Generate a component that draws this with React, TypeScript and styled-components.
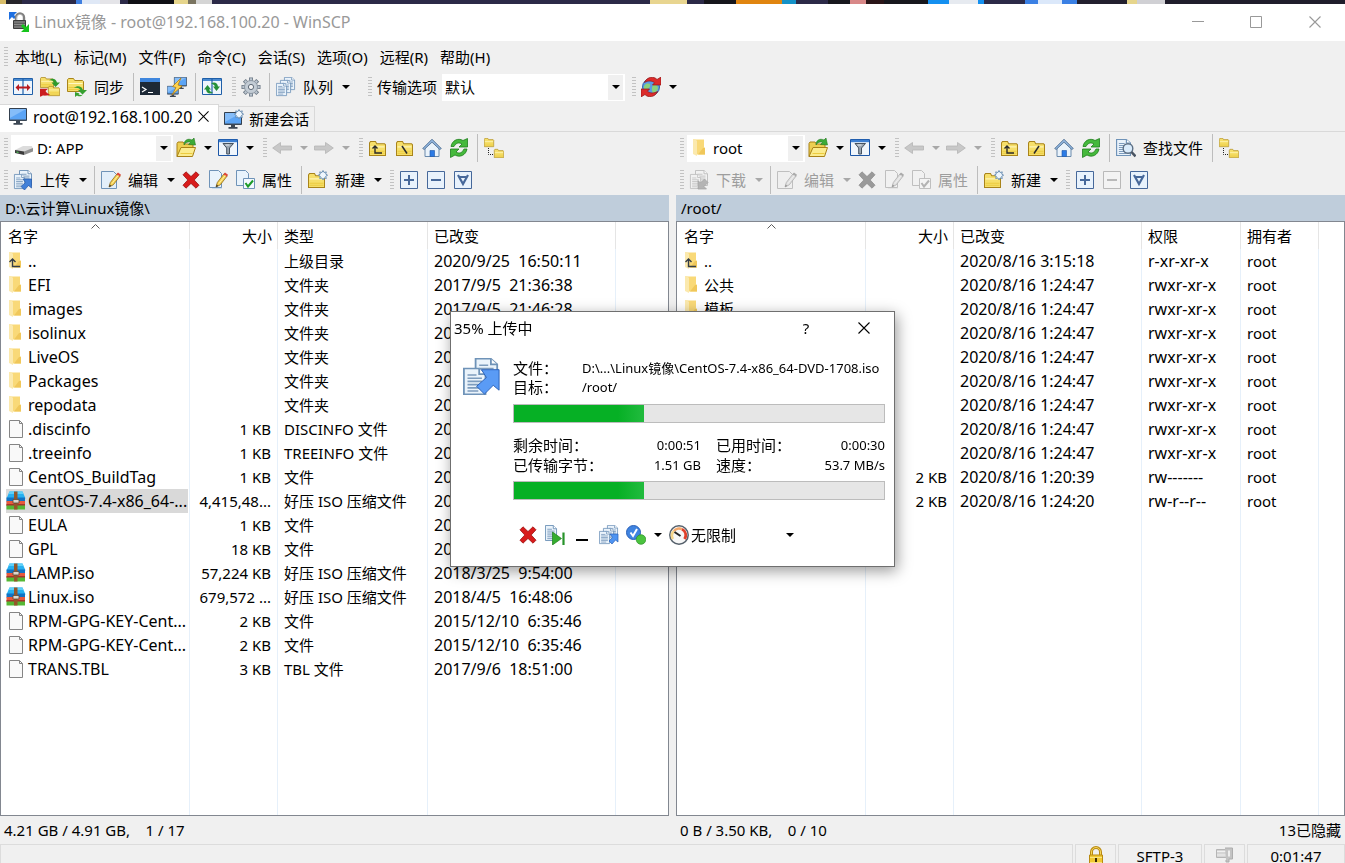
import React from "react";
import styled, { createGlobalStyle, css } from "styled-components";

const uiFont = `"Noto Sans", "Noto Sans CJK SC", sans-serif`;

const GlobalStyle = createGlobalStyle`
  *, *::before, *::after { box-sizing: border-box; }
  body {
    margin: 0;
    background: #f0f0f0;
    color: #000;
    font: 15px/20px ${uiFont};
    overflow: hidden;
  }
  button, select, input { font: inherit; color: inherit; }
`;

/* ---------- Icons ---------- */

type Drawing = { children: React.ReactNode; size?: number };

const Svg = ({ children, size = 20 }: Drawing) => (
  <svg width={size} height={size} viewBox="0 0 20 20" aria-hidden="true">
    {children}
  </svg>
);

const FolderShape = ({ x = 0, y = 0, w = 17, h = 14 }) => (
  <g transform={`translate(${x} ${y}) scale(${w / 17} ${h / 14})`}>
    <path d="M.5 13.500V1.800L1.500.5h5l1.200 2h7.800l1 1v10z" fill="#f6df6a" stroke="#a9841a" />
    <path d="M1.500 5.500h14" stroke="#fff8c4" />
    <path d="M1.500 9.500h14M1.500 11.500h14" stroke="#eccb3f" />
  </g>
);

const PageShape = ({ x = 0, y = 0, w = 13, h = 17 }) => (
  <g transform={`translate(${x} ${y}) scale(${w / 13} ${h / 17})`}>
    <path d="M.5.5h8.500l3.500 3.500v12.500H.5z" fill="#eaf3fb" stroke="#6f93b8" />
    <path d="M9 .5V4h3.500" fill="#fff" stroke="#6f93b8" />
    <path d="M2.500 4.500h5M2.500 6.500h8M2.500 8.500h8M2.500 10.500h8M2.500 12.500h8M2.500 14.500h6" stroke="#7d9cbd" />
  </g>
);

const MonitorShape = ({ x = 0, y = 0, s = 1 }) => (
  <g transform={`translate(${x} ${y}) scale(${s})`}>
    <path d="M.5.5h17v12H.5z" fill="#5ba4f5" stroke="#34404e" />
    <path d="M1 1h16L1 10z" fill="#85bdf9" />
    <path d="M1 12h16" stroke="#44505e" />
    <path d="M7 13h4v2h2.500v1.800h-9V15H7z" fill="#3c4754" />
  </g>
);

const BurstShape = ({ x = 0, y = 0 }) => (
  <path
    transform={`translate(${x} ${y})`}
    d="M5 .5l1.100 2 2.200-.6-.6 2.200 1.900 1.100-1.900 1.100.6 2.200-2.200-.6L5 9.900l-1.100-2-2.200.6.6-2.200L.4 5.200l1.900-1.100-.6-2.200 2.200.6z"
    fill="#eef6fd"
    stroke="#5f86ad"
    strokeWidth=".9"
  />
);

const PencilShape = () => (
  <g>
    <path d="M8 17l1.300-4.500 7-9 3 2.300-7 9z" fill="#f7d14f" stroke="#8d6a1c" strokeWidth=".8" />
    <path d="M15.500 4.500l1.500-2 3 2.300-1.500 2z" fill="#e0473b" />
    <path d="M8 17l.7-2.400 1.600 1.300z" fill="#333" />
    <path d="M10.800 13.800l6.500-8.500" stroke="#fdf0a8" />
  </g>
);

const AppLogo = () => (
  <Svg>
    <path d="M0 0h8L5 3l2 2-2 2-2-2-3 3z" fill="#1e6fe0" />
    <path d="M7 9V5.500a4 4 0 0 1 8 0V9" fill="none" stroke="#808080" strokeWidth="2.400" />
    <path d="M7.500 9V5.500a3.500 3.500 0 0 1 6 -2" fill="none" stroke="#c8c8c8" strokeWidth=".8" />
    <path d="M4.500 8.500h12v8h-12z" fill="#5e5e5e" stroke="#3c3c3c" />
    <path d="M5 10h11M5 12.500h11M5 15h11" stroke="#8f8f8f" />
    <path d="M20 20h-8l3-3-3-3 2-2 3 3 3-3z" fill="#17c41c" />
  </Svg>
);

const CompareIcon = () => (
  <Svg>
    <path d="M.5 1.500h19v16H.5z" fill="#eef5fc" stroke="#1f5fa8" />
    <path d="M1 3h18" stroke="#4a8ad0" strokeWidth="2" />
    <path d="M10 2v15" stroke="#1f5fa8" strokeWidth="1.200" />
    <path d="M2.500 10.500L6 7v2.500h8V7l3.500 3.500L14 14v-2.500H6V14z" fill="#b81a20" />
  </Svg>
);

const SyncBrowseIcon = () => (
  <Svg>
    <FolderShape x={0} y={0} w={14} h={11} />
    <FolderShape x={8} y={9} w={12} h={10} />
    <path d="M9 3.500c3-3 7-2 8 2h3L15.500 10 11.500 5.500H14c-1-1.800-2.500-2.500-5-2z" fill="#2f9a2c" />
    <path d="M10 17.500c-4 2-7 .5-8 1.500l-2 .8v-8h8L5.500 14c1 2 2.500 2.500 4.500 3.500z" fill="#cb1d1f" />
  </Svg>
);

const SyncIcon = () => (
  <Svg>
    <FolderShape x={0} y={1} w={17} h={14} />
    <path d="M7 11c3-3 8-2 9 2h4l-4.500 4.500L11 13h2.500C12 11 10 10.500 7 11z" fill="#36a030" />
    <path d="M16 17.500c-2 2.500-5 2-6 1l-2 1.500v-5l4.500 1.500-1 .8c1 1 3 1 4.500.2z" fill="#36a030" />
  </Svg>
);

const TerminalIcon = () => (
  <Svg>
    <path d="M0 1h20v17H0z" fill="#1d2936" />
    <path d="M0 1h20v4H0z" fill="#3f86dd" />
    <path d="M2 10l4 2.500L2 15M8 15.500h5" fill="none" stroke="#fff" strokeWidth="1.200" />
  </Svg>
);

const PuttyIcon = () => (
  <Svg>
    <MonitorShape x={7} y={0} s={0.72} />
    <MonitorShape x={0} y={9} s={0.65} />
    <path d="M14 1L5.500 9.500 9 10.500 5 18l10-9-4-1z" fill="#ffd34d" stroke="#b07c16" strokeWidth=".8" />
  </Svg>
);

const SplitIcon = () => (
  <Svg>
    <path d="M.5 1.500h19v16H.5z" fill="#eef5fc" stroke="#1f5fa8" />
    <path d="M1 3h18" stroke="#4a8ad0" strokeWidth="2" />
    <path d="M10 2v15" stroke="#1f5fa8" strokeWidth="1.200" />
    <path d="M9 6.500c3-2 6.500-1 7 3h2L14.500 14 11 9.500h2c-.5-1.500-2-2.500-4-3z" fill="#269138" />
    <path d="M11 15.500c-3 2-6.500 1-7-3H2L5.500 8 9 12.500H7c.5 1.500 2 2.500 4 3z" fill="#269138" />
  </Svg>
);

const GearIcon = () => (
  <Svg>
    <g stroke="#6b7784" strokeWidth="4">
      <path d="M10 .5v19M.5 10h19M3.300 3.300l13.400 13.400M16.700 3.300L3.300 16.700" />
    </g>
    <g stroke="#bcc6d0" strokeWidth="2.400">
      <path d="M10 1.300v17.400M1.300 10h17.400M3.900 3.900l12.200 12.200M16.100 3.900L3.900 16.100" />
    </g>
    <circle cx="10" cy="10" r="6.500" fill="#c3ccd5" stroke="#8c97a3" />
    <circle cx="10" cy="10" r="2.600" fill="#f4f4f4" stroke="#5f6b78" />
  </Svg>
);

const QueueIcon = () => (
  <Svg>
    <PageShape x={8} y={0} w={11} h={13} />
    <PageShape x={4} y={3} w={11} h={13} />
    <PageShape x={0} y={6} w={11} h={13} />
  </Svg>
);

const GlobeIcon = () => (
  <Svg>
    <circle cx="10" cy="10" r="8.500" fill="#5a9be6" stroke="#3566a8" />
    <path d="M5 7c3-1 5 0 4 2.500s-3 2-4 4.500c-3-2-2.500-6 0-7zM12 8c3-1 5 1 5 3s-3 5-5 6c-1-3-2-6 0-9z" fill="#8ad17c" />
    <path d="M3.500 5.500C6-.5 13-1 16 2.500L20 0v8h-8.500l2-2.200C11 3.500 7 3.500 3.500 5.500z" fill="#dc2b2b" stroke="#8f1414" strokeWidth=".7" />
    <path d="M16.500 14.500C14 20.500 7 21 4 17.500L0 20v-8h8.500l-2 2.200c2.500 2.300 6.500 2.300 10 .3z" fill="#dc2b2b" stroke="#8f1414" strokeWidth=".7" />
  </Svg>
);

const MonitorIcon = () => (
  <Svg>
    <MonitorShape x={1} y={1} />
  </Svg>
);

const NewSessionIcon = () => (
  <Svg>
    <MonitorShape x={0} y={3} />
    <BurstShape x={10} y={0} />
  </Svg>
);

const DriveIcon = () => (
  <Svg>
    <path d="M1 12l8-4h9l1 3-9 5z" fill="#dcdcdc" />
    <path d="M1 12l9 1.500V17L1 15z" fill="#3b3b3b" />
    <path d="M10 13.500l9-3.500v3.500L10 17z" fill="#8f8f8f" />
    <path d="M2.500 14l2 .4" stroke="#4dde5a" />
  </Svg>
);

const OpenFolderIcon = () => (
  <Svg>
    <path d="M1 18.500V5.500l1-1.500h5l1.500 2H17v4" fill="#edcf52" stroke="#a98217" />
    <path d="M1 18.500L5 9.500h14.500L16.500 18.500z" fill="#fbec8d" stroke="#a98217" />
    <path d="M4.500 15.500h12" stroke="#eccb3f" />
    <path d="M8 7c0-5 4-7 8-5l2-2 1.500 7-7-.5 2-2C12.500 3.500 10 4 8 7z" fill="#3bab38" stroke="#23791f" strokeWidth=".6" />
  </Svg>
);

const FilterIcon = () => (
  <Svg>
    <path d="M.5 1.500h19v16H.5z" fill="#f0f6fc" stroke="#1c56a6" />
    <path d="M1 3h18" stroke="#3c7fd2" strokeWidth="2.400" />
    <path d="M5 5.500h10.500L11.500 10v6h-2.800v-6z" fill="#9aa6b2" stroke="#46525f" />
    <path d="M7.500 7h4" stroke="#e9eef3" />
  </Svg>
);

const BackArrow = () => (
  <Svg>
    <path d="M.7 10L8.500 4.500V8h11v4h-11v3.500z" fill="#c8c8c8" stroke="#b5b5b5" strokeWidth=".8" />
  </Svg>
);

const ForwardArrow = () => (
  <Svg>
    <path d="M19.300 10L11.500 4.500V8H.5v4h11v3.500z" fill="#c8c8c8" stroke="#b5b5b5" strokeWidth=".8" />
  </Svg>
);

const ParentFolderIcon = () => (
  <Svg>
    <FolderShape x={1} y={3} w={17} h={15} />
    <path d="M7 8.500v6.500h7M4.500 10.500L7 8l2.500 2.500" fill="none" stroke="#2a2a2a" strokeWidth="1.400" />
  </Svg>
);

const RootFolderIcon = ({ slash }: { slash: string }) => (
  <Svg>
    <FolderShape x={1} y={3} w={17} h={15} />
    <path d={slash === "\\" ? "M7 8l5 7.500" : "M12 8l-5 7.500"} stroke="#2a2a2a" strokeWidth="1.500" />
  </Svg>
);

const HomeIcon = () => (
  <Svg>
    <path d="M3 9.500v9h14v-9L10 3z" fill="#eaf3fb" stroke="#6a8aac" />
    <path d="M.7 10.500L10 1.200l9.300 9.300-1.500 1L10 4.200l-7.800 7.300z" fill="#8fb3dc" stroke="#48688b" strokeWidth=".8" />
    <path d="M8 12.500h4.500v6H8z" fill="#2c7be5" stroke="#1c56a6" strokeWidth=".6" />
  </Svg>
);

const RefreshIcon = () => (
  <Svg>
    <path d="M2 8.500C3 2.500 9-.5 14 2.500L18.500.5v8.500h-8.500l3-3C9.500 4 7 5 5 8.500z" fill="#45b93c" stroke="#1e7d1c" strokeWidth=".8" />
    <path d="M18 11c-1 6-7 9-12 6l-4.500 2.500V11H10l-3 3c3.500 2 6 1 8-3z" fill="#45b93c" stroke="#1e7d1c" strokeWidth=".8" />
  </Svg>
);

const TreeIcon = () => (
  <Svg>
    <FolderShape x={0} y={0} w={10} h={9} />
    <FolderShape x={10} y={11} w={10} h={9} />
    <path d="M4.500 10v6.500H9" fill="none" stroke="#222" strokeDasharray="1 1" />
  </Svg>
);

const CopyDocs = ({ size = 20 }: { size?: number }) => (
  <Svg size={size}>
    <PageShape x={6} y={0} w={12} h={14} />
    <PageShape x={0} y={5} w={12} h={14} />
    <path d="M18.500 6v10.500L15.500 14l-4.500 4.500-4-4L12 10 9.500 6z" fill="#5a9bf5" stroke="#2a61b8" strokeWidth=".5" />
  </Svg>
);

const UploadIcon = () => (
  <Svg>
    <PageShape x={6} y={0} w={13} h={16} />
    <PageShape x={1} y={4} w={11} h={15} />
    <path d="M18.500 9v9l-3-2.500L11.500 20 8 16.500l4.500-4L10 9z" fill="#4180d8" stroke="#2458a8" strokeWidth=".7" />
  </Svg>
);

const DownloadIcon = () => (
  <Svg>
    <PageShape x={6} y={0} w={13} h={16} />
    <PageShape x={1} y={4} w={11} h={15} />
    <path d="M9 19v-8.500l2.500 2.500L15.500 9l3.500 3.500-4 4 2.500 2.500z" fill="#4180d8" stroke="#2458a8" strokeWidth=".7" />
  </Svg>
);

const EditIcon = () => (
  <Svg>
    <path d="M.5 1.500h12l3 3v14H.5z" fill="#e3effa" stroke="#6f93b8" />
    <PencilShape />
  </Svg>
);

const EditCopyIcon = () => (
  <Svg>
    <path d="M4 3.500h10V19H4z" fill="#cbdcec" />
    <path d="M1.500.5h9l3 3v14h-12z" fill="#e9f3fc" stroke="#6f93b8" />
    <PencilShape />
  </Svg>
);

const DeleteIcon = () => (
  <Svg>
    <path
      d="M2 4.800L5 1.800l5 4.800 5-4.800 3 3-4.800 5.200 4.800 5.200-3 3-5-4.800-5 4.800-3-3L6.800 10z"
      fill="#d81b1b"
      stroke="#9c1010"
      strokeWidth=".8"
    />
  </Svg>
);

const PropertiesIcon = () => (
  <Svg>
    <path d="M1.500.5h9l3 3v12h-12z" fill="#e9f3fc" stroke="#6f93b8" />
    <path d="M8.500 8.500h11v10h-11z" fill="#f3f9ff" stroke="#6f93b8" />
    <path d="M10.500 13l2.500 3.500 5-6" fill="none" stroke="#1c9a27" strokeWidth="2" />
  </Svg>
);

const NewFolderIcon = () => (
  <Svg>
    <FolderShape x={0} y={3} w={17} h={15} />
    <BurstShape x={10} y={0} />
  </Svg>
);

const BoxIcon = ({ sign, off }: { sign: "plus" | "minus" | "all"; off?: boolean }) => {
  const ink = off ? "#b9b9b9" : "#46689a";
  return (
    <Svg>
      <path d="M1.500 1.500h17v17h-17z" fill={off ? "#f3f3f3" : "#e8f2fc"} stroke={ink} />
      {sign === "plus" && <path d="M5 10h10M10 5v10" stroke={ink} strokeWidth="2" />}
      {sign === "minus" && <path d="M5 10h10" stroke={ink} strokeWidth="2" />}
      {sign === "all" && <path d="M5 5l5 9 5-9M7 7h6" fill="none" stroke={ink} strokeWidth="2.200" />}
    </Svg>
  );
};

const FindIcon = () => (
  <Svg>
    <PageShape x={0} y={1} w={15} h={17} />
    <circle cx="12" cy="10.500" r="4.800" fill="#d9ebfb" stroke="#5c6f84" strokeWidth="1.400" />
    <path d="M15.500 14l4 4.500" stroke="#4a5563" strokeWidth="2.600" />
  </Svg>
);

const ListFolder = ({ up }: { up?: boolean }) => (
  <Svg>
    <path d="M5 1.500h9v8h1v7H5z" fill="#f9d978" />
    <path d="M13 10h2v6.500H8z" fill="#f0c75a" />
    <path d="M3 1h2l2 2v15l-4-2z" fill="#fbe9ae" />
    {up && <path d="M6.500 8.500v7h7.500M3.500 11l3-3 3 3" fill="none" stroke="#333c48" strokeWidth="1.400" />}
  </Svg>
);

const ListFile = () => (
  <Svg>
    <path d="M3.500 1.500h10l3 3v14h-13z" fill="#f9f9f9" stroke="#858585" />
    <path d="M13.500 1.500v3h3" fill="none" stroke="#858585" />
  </Svg>
);

const ArchiveIcon = () => (
  <Svg>
    <path d="M3.500.5h13l3 7H.5z" fill="#27b0f0" />
    <path d="M3.500.5h13l1 2.500h-15z" fill="#5fd0f8" />
    <path d="M.5 6.500h18.500v4H.5z" fill="#1272c4" />
    <path d="M.5 10h18.500v4.500H.5z" fill="#e8593c" />
    <path d="M.5 13h18.500v2H.5z" fill="#a5352a" />
    <path d="M.5 14.500h18.500v4H.5z" fill="#55b835" />
    <path d="M8 .5h3.500v18H8z" fill="#93572a" />
    <path d="M7 8.500h6v3.500H7z" fill="#ddd6cc" stroke="#5b4a38" strokeWidth=".8" />
  </Svg>
);

const LockIcon = () => (
  <Svg>
    <path d="M5.500 10V6a4.500 4.500 0 0 1 9 0v4" fill="none" stroke="#b98a10" strokeWidth="3" />
    <path d="M5.500 10V6a4.500 4.500 0 0 1 9 0v4" fill="none" stroke="#f5d65b" />
    <path d="M3.500 9h13v10h-13z" fill="#f1c832" stroke="#b98a10" />
    <path d="M4 11.500h12M4 16.500h12" stroke="#fae57f" />
    <path d="M10 12v4" stroke="#3b2d05" strokeWidth="2" />
  </Svg>
);

const CompressIcon = () => (
  <Svg>
    <path d="M1.500 3.500h11v8h-11z" fill="#d5d5d5" stroke="#b5b5b5" />
    <path d="M2 5.500h10M2 9h10" stroke="#f0f0f0" />
    <path d="M10 2h7.500v11H14v3h-3v-2" fill="#c3c3c3" stroke="#adadad" />
    <path d="M13 4.500h2v6h-2z" fill="#eee" />
    <path d="M6 18h11" stroke="#b5b5b5" strokeWidth="2" />
  </Svg>
);

const SkipIcon = () => (
  <Svg>
    <PageShape x={0} y={0} w={12} h={16} />
    <path d="M7.500 7l9 6.500-9 6.500z" fill="#35ad2e" stroke="#1e7d1c" strokeWidth=".7" />
    <path d="M18.500 7.500v12.500" stroke="#27932a" strokeWidth="2.200" />
  </Svg>
);

const MinimizeIcon = () => (
  <Svg>
    <path d="M4 15h12" stroke="#000" strokeWidth="2" />
  </Svg>
);

const BackgroundIcon = () => (
  <Svg>
    <PageShape x={8} y={0} w={11} h={13} />
    <PageShape x={4} y={3} w={11} h={13} />
    <PageShape x={0} y={6} w={11} h={13} />
    <path d="M19 9v8l-2.500-2L13 19l-3-3 3.500-3.500-2.500-3.500z" fill="#4e94f2" stroke="#2a61b8" strokeWidth=".7" />
  </Svg>
);

const DoneActionIcon = () => (
  <Svg>
    <circle cx="7.500" cy="7.500" r="7" fill="#3f83e0" stroke="#2a61b8" />
    <path d="M4.500 7.500l2.500 3.500 4-7" fill="none" stroke="#fff" strokeWidth="2" />
    <circle cx="15" cy="14.500" r="4.800" fill="#4bc33f" stroke="#2c8f27" strokeWidth=".7" />
  </Svg>
);

const GaugeIcon = () => (
  <Svg>
    <circle cx="10" cy="10" r="9.200" fill="#f7f7f7" stroke="#55606b" strokeWidth="1.500" />
    <path d="M4 14A6.500 6.500 0 0 1 5 6" fill="none" stroke="#f5d58a" strokeWidth="2.500" />
    <path d="M5 6a6.500 6.500 0 0 1 8-1.800" fill="none" stroke="#f4a86a" strokeWidth="2.500" />
    <path d="M13 4.200a6.500 6.500 0 0 1 2.500 9.800" fill="none" stroke="#e0402b" strokeWidth="2.800" />
    <path d="M5.500 7l6 4" stroke="#222" strokeWidth="2" />
  </Svg>
);

const Caret = () => (
  <svg width="8" height="4" viewBox="0 0 8 4" aria-hidden="true">
    <path d="M0 0h8L4 4z" fill="currentColor" />
  </svg>
);

const Cross = ({ size = 12 }: { size?: number }) => (
  <svg width={size} height={size} viewBox="0 0 12 12" aria-hidden="true">
    <path d="M.5.5l11 11M11.500.5l-11 11" stroke="currentColor" strokeWidth="1.100" />
  </svg>
);

/* ---------- Window frame ---------- */

const Window = styled.div`
  display: flex;
  flex-direction: column;
  height: 100vh;
  overflow: hidden;
  svg { display: block; flex: none; }
`;

const DesktopEdge = styled.div`
  flex: none;
  height: 4px;
  background: linear-gradient(
    90deg,
    #d8bd6a 0 6px, #26242a 6px 22px, #2c2a48 22px 76px, #3f7fe0 76px 82px, #dfe8f6 82px 100px,
    #e4e4e8 100px 120px, #2c2a48 120px 128px, #101015 128px 174px, #e6d58c 174px 188px, #7a7460 188px 196px,
    #d5d5d5 196px 212px, #2c2a48 212px 650px, #e8d590 650px 687px, #2c2a48 687px 704px, #16161c 704px 736px,
    #e08510 736px 782px, #1492c8 782px 796px, #2c2a48 796px 828px, #17171d 828px 850px, #d88888 850px 866px,
    #2a1518 866px 884px, #17171d 884px 928px, #1490f0 928px 949px, #e6eaf0 949px 978px, #1490f0 978px 984px,
    #2c2a48 984px 1025px, #3a80e4 1025px 1038px, #dbe8fa 1038px 1062px, #3a80e4 1062px 1077px,
    #22202e 1077px 1127px, #e6d58c 1127px 1137px, #d0d0d4 1137px 1165px, #1f1d2b 1165px
  );
`;

const TitleBar = styled.header`
  flex: none;
  display: flex;
  align-items: center;
  height: 37px;
  padding: 0 0 2px 9px;
  background: #fff;
  color: #999;
`;

const WindowTitle = styled.h1`
  flex: 1;
  margin: 0 0 0 5px;
  font-size: 16px;
  font-weight: 400;
  white-space: nowrap;
`;

const FrameButton = styled.button<{ $w?: number }>`
  display: flex;
  align-items: center;
  justify-content: center;
  width: ${(p) => p.$w ?? 58}px;
  height: 100%;
  padding: 0;
  border: 0;
  background: none;
`;

const MenuBar = styled.nav`
  flex: none;
  display: flex;
  align-items: center;
  height: 31px;
  padding-left: 4px;
`;

const MenuItem = styled.button`
  padding: 0 7px 0 5px;
  border: 0;
  background: none;
  white-space: nowrap;
`;

/* ---------- Toolbars ---------- */

const ToolRow = styled.div<{ $h?: number }>`
  flex: none;
  display: flex;
  align-items: center;
  height: ${(p) => p.$h ?? 30}px;
  padding-left: 4px;
`;

const Grip = styled.span<{ $before?: number }>`
  flex: none;
  width: 4px;
  height: 20px;
  margin: 0 2px 0 ${(p) => p.$before ?? 0}px;
  background: repeating-linear-gradient(#c2c2c2 0 1px, transparent 1px 3px);
`;

const Divider = styled.span`
  flex: none;
  width: 1px;
  height: 28px;
  margin: 0 3px 0 4px;
  background: #bdbdbd;
`;

const ToolButton = styled.button<{ $labelled: boolean }>`
  flex: none;
  display: flex;
  align-items: center;
  gap: 7px;
  height: 26px;
  padding: 0 ${(p) => (p.$labelled ? 5 : 4)}px 0 3px;
  border: 0;
  background: none;
  white-space: nowrap;
  &:disabled { color: #9d9d9d; }
  &:disabled svg { filter: grayscale(1) opacity(0.5); }
`;

const CaretButton = styled.button`
  flex: none;
  display: flex;
  align-items: center;
  justify-content: center;
  width: 15px;
  height: 26px;
  padding: 0;
  border: 0;
  background: none;
  &:disabled { color: #a8a8a8; }
`;

const FieldLabel = styled.label`
  padding: 0 5px 0 3px;
  white-space: nowrap;
`;

const Combo = styled.div<{ $w: number; $flat?: boolean }>`
  flex: none;
  display: flex;
  align-items: center;
  width: ${(p) => p.$w}px;
  height: 27px;
  padding: 1px 2px 1px 3px;
  background: #fff;
  ${(p) =>
    p.$flat &&
    css`
      padding-left: 4px;
      gap: 2px;
    `}
`;

const ComboSelect = styled.select`
  flex: 1;
  min-width: 0;
  height: 25px;
  padding: 0;
  border: 0;
  background: transparent;
  appearance: none;
  outline: 0;
`;

const ComboCaret = styled.span<{ $flat?: boolean }>`
  display: flex;
  align-items: center;
  justify-content: center;
  width: 15px;
  height: 25px;
  background: ${(p) => (p.$flat ? "transparent" : "#f0f0f0")};
  pointer-events: none;
`;

const ComboIcon = styled.span`
  margin-right: 3px;
`;

const PlaceRow = styled(ToolRow)`
  ${Grip} + ${Combo} { margin-left: 1px; }
`;

/* ---------- Session tabs ---------- */

const Tabs = styled.div`
  flex: none;
  display: flex;
  align-items: flex-end;
  height: 30px;
  box-shadow: inset 0 -1px #d9d9d9;
`;

const Tab = styled.div<{ $active?: boolean }>`
  display: flex;
  align-items: center;
  height: ${(p) => (p.$active ? 28 : 26)}px;
  border: 1px solid #d9d9d9;
  border-left-width: 0;
  border-bottom-color: ${(p) => (p.$active ? "#fff" : "#d9d9d9")};
  background: ${(p) => (p.$active ? "#fff" : "#f0f0f0")};
  padding: ${(p) => (p.$active ? "0 9px 3px 8px" : "0 5px")};
  font-size: ${(p) => (p.$active ? 16 : 15)}px;
`;

const TabButton = styled.button`
  display: flex;
  align-items: center;
  gap: 5px;
  padding: 0;
  border: 0;
  background: none;
  white-space: nowrap;
`;

const TabClose = styled.button`
  margin-left: 6px;
  padding: 0;
  border: 0;
  background: none;
`;

/* ---------- Panes ---------- */

const Panes = styled.main`
  flex: 1;
  min-height: 0;
  display: grid;
  grid-template-columns: 1fr 1fr;
  grid-template-rows: 1fr;
  column-gap: 7px;
`;

const Pane = styled.section`
  display: flex;
  flex-direction: column;
  min-width: 0;
  min-height: 0;
`;

const PathBar = styled.div`
  flex: none;
  height: 26px;
  padding: 3px 5px;
  background: #bfcddb;
  white-space: nowrap;
`;

const ListBox = styled.div`
  flex: 1;
  min-height: 0;
  border: 1px solid #828790;
  background: #fff;
  overflow: hidden;
`;

const FileTable = styled.table`
  width: 100%;
  height: 100%;
  table-layout: fixed;
  border-collapse: separate;
  border-spacing: 0;
`;

const Col = styled.col<{ $w?: number }>`
  ${(p) => p.$w && `width: ${p.$w}px;`}
`;

const HeadCell = styled.th<{ $right?: boolean }>`
  position: relative;
  height: 27px;
  padding: ${(p) => (p.$right ? "0 5px" : "1px 6px 0")};
  border-right: 1px solid #e5e5e5;
  font-weight: 400;
  text-align: ${(p) => (p.$right ? "right" : "left")};
  white-space: nowrap;
  &:first-child { padding-left: 7px; }
  &:last-child { border-right: 0; }
`;

const SortMark = styled.svg`
  position: absolute;
  top: 2px;
  left: calc(50% - 4px);
`;

const Cell = styled.td<{ $right?: boolean; $large?: boolean }>`
  height: 24px;
  padding: 0 6px;
  border-right: 1px solid #e6f0fa;
  font-size: ${(p) => (p.$large ? 16 : 15)}px;
  text-align: ${(p) => (p.$right ? "right" : "left")};
  white-space: pre;
  overflow: hidden;
  &:last-child { border-right: 0; }
`;

const NameCell = styled(Cell)`
  padding: 0 1px 0 5px;
`;

const FillerCell = styled(Cell)`
  height: auto;
`;

const NameBox = styled.div<{ $selected?: boolean }>`
  display: flex;
  align-items: center;
  gap: 2px;
  height: 24px;
  overflow: hidden;
  background: ${(p) => (p.$selected ? "#d9d9d9" : "transparent")};
`;

const PaneStatus = styled.div`
  flex: none;
  display: flex;
  justify-content: space-between;
  align-items: center;
  height: 28px;
  padding: 0 4px;
  white-space: pre;
`;

const StatusBar = styled.footer`
  flex: none;
  display: flex;
  gap: 2px;
  height: 19px;
  overflow: hidden;
`;

const StatusBox = styled.div<{ $w?: number }>`
  display: flex;
  align-items: center;
  justify-content: center;
  flex: ${(p) => (p.$w ? "none" : "1")};
  width: ${(p) => (p.$w ? `${p.$w}px` : "auto")};
  height: 24px;
  border: 1px solid #dcdcdc;
`;

/* ---------- Progress dialog ---------- */

const Overlay = styled.div`
  position: fixed;
  inset: 0;
  display: flex;
  justify-content: center;
  align-items: flex-start;
  padding-top: 311px;
  svg { display: block; flex: none; }
`;

const Dialog = styled.div`
  width: 445px;
  height: 256px;
  border: 1px solid #6f6f6f;
  background: #fff;
  box-shadow: 2px 4px 14px rgba(0, 0, 0, 0.4);
`;

const DialogTitle = styled.div`
  display: flex;
  align-items: center;
  height: 31px;
  padding-left: 3px;
`;

const DialogHeading = styled.h2`
  flex: 1;
  margin: 0;
  font-size: 15px;
  font-weight: 400;
`;

const DialogBody = styled.div`
  display: flex;
  gap: 11px;
  padding: 15px 9px 0 12px;
`;

const Details = styled.div`
  flex: 1;
  min-width: 0;
`;

const PairGrid = styled.dl`
  display: grid;
  grid-template-columns: 69px 1fr;
  grid-auto-rows: 19px;
  align-items: center;
  margin: 0 0 8px;
`;

const StatGrid = styled.dl`
  display: grid;
  grid-template-columns: 88px 100px 84px 1fr;
  grid-auto-rows: 20px;
  align-items: center;
  margin: 12px 0 6px;
`;

const Term = styled.dt`
  font-size: 15px;
  white-space: nowrap;
`;

const Value = styled.dd<{ $right?: boolean }>`
  margin: 0;
  font-size: 13px;
  text-align: ${(p) => (p.$right ? "right" : "left")};
  white-space: nowrap;
`;

const RightTerm = styled(Term)`
  padding-left: 15px;
`;

const Track = styled.div`
  height: 19px;
  border: 1px solid #bcbcbc;
  background: #e6e6e6;
`;

const Fill = styled.div`
  height: 100%;
  background: linear-gradient(90deg, #06b025 80%, #1fba3c 98%);
`;

const DialogTools = styled.div`
  display: flex;
  align-items: center;
  height: 30px;
  margin: 20px 0 0 2px;
`;

const percent = 35;

const ProgressBar = ({ label }: { label: string }) => (
  <Track role="progressbar" aria-label={label} aria-valuenow={percent} aria-valuemin={0} aria-valuemax={100}>
    <Fill style={{ width: `${percent}%` }} />
  </Track>
);

/* ---------- Data ---------- */

type Kind = "up" | "folder" | "file" | "archive";
type Row = { kind: Kind; name: string; selected?: boolean; cells: string[] };

const kindIcon: Record<Kind, React.ReactNode> = {
  up: <ListFolder up />,
  folder: <ListFolder />,
  file: <ListFile />,
  archive: <ArchiveIcon />,
};

const row = (kind: Kind, name: string, ...cells: string[]): Row => ({ kind, name, cells });

const localRows: Row[] = [
  row("up", "..", "", "上级目录", "2020/9/25  16:50:11"),
  row("folder", "EFI", "", "文件夹", "2017/9/5  21:36:38"),
  row("folder", "images", "", "文件夹", "2017/9/5  21:46:28"),
  row("folder", "isolinux", "", "文件夹", "2017/9/5  21:36:38"),
  row("folder", "LiveOS", "", "文件夹", "2017/9/5  21:36:38"),
  row("folder", "Packages", "", "文件夹", "2017/9/5  21:36:38"),
  row("folder", "repodata", "", "文件夹", "2017/9/5  21:36:38"),
  row("file", ".discinfo", "1 KB", "DISCINFO 文件", "2017/9/5  21:36:38"),
  row("file", ".treeinfo", "1 KB", "TREEINFO 文件", "2017/9/5  21:36:38"),
  row("file", "CentOS_BuildTag", "1 KB", "文件", "2017/9/5  21:36:38"),
  { ...row("archive", "CentOS-7.4-x86_64-...", "4,415,48...", "好压 ISO 压缩文件", "2018/3/25  9:54:00"), selected: true },
  row("file", "EULA", "1 KB", "文件", "2017/9/5  21:36:38"),
  row("file", "GPL", "18 KB", "文件", "2017/9/5  21:36:38"),
  row("archive", "LAMP.iso", "57,224 KB", "好压 ISO 压缩文件", "2018/3/25  9:54:00"),
  row("archive", "Linux.iso", "679,572 ...", "好压 ISO 压缩文件", "2018/4/5  16:48:06"),
  row("file", "RPM-GPG-KEY-Cent...", "2 KB", "文件", "2015/12/10  6:35:46"),
  row("file", "RPM-GPG-KEY-Cent...", "2 KB", "文件", "2015/12/10  6:35:46"),
  row("file", "TRANS.TBL", "3 KB", "TBL 文件", "2017/9/6  18:51:00"),
];

const remoteRows: Row[] = [
  row("up", "..", "", "2020/8/16 3:15:18", "r-xr-xr-x", "root"),
  ...["公共", "模板", "视频", "图片", "文档", "下载", "音乐", "桌面"].map((name) =>
    row("folder", name, "", "2020/8/16 1:24:47", "rwxr-xr-x", "root"),
  ),
  row("file", "anaconda-ks.cfg", "2 KB", "2020/8/16 1:20:39", "rw-------", "root"),
  row("file", "initial-setup-ks.cfg", "2 KB", "2020/8/16 1:24:20", "rw-r--r--", "root"),
];

type Column = { head: string; width: number; large?: boolean };

const localColumns: Column[] = [
  { head: "名字", width: 189, large: true },
  { head: "大小", width: 88 },
  { head: "类型", width: 150 },
  { head: "已改变", width: 188, large: true },
];

const remoteColumns: Column[] = [
  { head: "名字", width: 189 },
  { head: "大小", width: 88 },
  { head: "已改变", width: 188, large: true },
  { head: "权限", width: 99, large: true },
  { head: "拥有者", width: 78 },
];

const menus = ["本地(L)", "标记(M)", "文件(F)", "命令(C)", "会话(S)", "选项(O)", "远程(R)", "帮助(H)"];

/* ---------- Parts ---------- */

const FileList = ({ columns, rows }: { columns: Column[]; rows: Row[] }) => (
  <ListBox>
    <FileTable>
      <colgroup>
        {columns.map((c) => (
          <Col key={c.head} $w={c.width} />
        ))}
        <Col />
      </colgroup>
      <thead>
        <tr>
          {columns.map((c, i) => (
            <HeadCell key={c.head} $right={i === 1}>
              {c.head}
              {i === 0 && (
                <SortMark width="9" height="5" viewBox="0 0 9 5">
                  <path d="M.5 4.500l4-4 4 4" fill="none" stroke="#5a5a5a" />
                </SortMark>
              )}
            </HeadCell>
          ))}
          <HeadCell as="td" />
        </tr>
      </thead>
      <tbody>
        {rows.map((r, i) => (
          <tr key={i}>
            <NameCell $large={columns[0].large}>
              <NameBox $selected={r.selected}>
                {kindIcon[r.kind]}
                {r.name}
              </NameBox>
            </NameCell>
            {r.cells.map((text, j) => (
              <Cell key={j} $right={j === 0} $large={columns[j + 1].large}>
                {text}
              </Cell>
            ))}
            <Cell />
          </tr>
        ))}
        <tr>
          {columns.map((c) => (
            <FillerCell key={c.head} />
          ))}
          <FillerCell />
        </tr>
      </tbody>
    </FileTable>
  </ListBox>
);

const Tool = ({ label, text, off, children }: { label?: string; text?: string; off?: boolean; children: React.ReactNode }) => (
  <ToolButton type="button" aria-label={text ? undefined : label} disabled={off} $labelled={!!text}>
    {children}
    {text}
  </ToolButton>
);

const More = ({ label, off }: { label: string; off?: boolean }) => (
  <CaretButton type="button" aria-label={label} disabled={off}>
    <Caret />
  </CaretButton>
);

const PlaceTools = ({ remote }: { remote?: boolean }) => (
  <PlaceRow $h={32}>
    <Grip />
    <Combo $w={remote ? 118 : 162}>
      <ComboIcon>{remote ? <ListFolder /> : <DriveIcon />}</ComboIcon>
      <ComboSelect aria-label={remote ? "远程目录" : "本地驱动器"}>
        <option>{remote ? "root" : "D: APP"}</option>
      </ComboSelect>
      <ComboCaret>
        <Caret />
      </ComboCaret>
    </Combo>
    <Tool label="打开目录"><OpenFolderIcon /></Tool>
    <More label="打开目录选项" />
    <Tool label="过滤"><FilterIcon /></Tool>
    <More label="过滤选项" />
    <Grip $before={6} />
    <Tool label="后退"><BackArrow /></Tool>
    <More label="后退历史" off />
    <Tool label="前进"><ForwardArrow /></Tool>
    <More label="前进历史" off />
    <Grip $before={6} />
    <Tool label="上级目录"><ParentFolderIcon /></Tool>
    <Tool label="根目录"><RootFolderIcon slash={remote ? "/" : "\\"} /></Tool>
    <Tool label="主目录"><HomeIcon /></Tool>
    <Tool label="刷新"><RefreshIcon /></Tool>
    <Divider />
    {remote && (
      <>
        <Tool text="查找文件"><FindIcon /></Tool>
        <Divider />
      </>
    )}
    <Tool label="目录树"><TreeIcon /></Tool>
  </PlaceRow>
);

const FileTools = ({ remote }: { remote?: boolean }) => (
  <ToolRow $h={31}>
    <Grip />
    <Tool text={remote ? "下载" : "上传"} off={remote}>{remote ? <DownloadIcon /> : <UploadIcon />}</Tool>
    <More label="传输选项" off={remote} />
    <Divider />
    <Tool text="编辑" off={remote}><EditIcon /></Tool>
    <More label="编辑选项" off={remote} />
    <Tool label="删除" off={remote}><DeleteIcon /></Tool>
    <Tool label="重命名" off={remote}><EditCopyIcon /></Tool>
    <Tool text="属性" off={remote}><PropertiesIcon /></Tool>
    <Divider />
    <Tool text="新建"><NewFolderIcon /></Tool>
    <More label="新建选项" />
    <Grip $before={5} />
    <Tool label="选择"><BoxIcon sign="plus" /></Tool>
    <Tool label="取消选择"><BoxIcon sign="minus" off={remote} /></Tool>
    <Tool label="全选"><BoxIcon sign="all" /></Tool>
  </ToolRow>
);

const UploadDialog = () => (
  <Overlay>
    <Dialog role="dialog" aria-labelledby="progress-title">
      <DialogTitle>
        <DialogHeading id="progress-title">35% 上传中</DialogHeading>
        <FrameButton type="button" $w={56}>?</FrameButton>
        <FrameButton type="button" $w={60} aria-label="关闭"><Cross /></FrameButton>
      </DialogTitle>
      <DialogBody>
        <CopyDocs size={39} />
        <Details>
          <PairGrid>
            <Term>文件：</Term>
            <Value>D:\...\Linux镜像\CentOS-7.4-x86_64-DVD-1708.iso</Value>
            <Term>目标：</Term>
            <Value>/root/</Value>
          </PairGrid>
          <ProgressBar label="文件进度" />
          <StatGrid>
            <Term>剩余时间：</Term>
            <Value $right>0:00:51</Value>
            <RightTerm>已用时间：</RightTerm>
            <Value $right>0:00:30</Value>
            <Term>已传输字节：</Term>
            <Value $right>1.51 GB</Value>
            <RightTerm>速度：</RightTerm>
            <Value $right>53.7 MB/s</Value>
          </StatGrid>
          <ProgressBar label="总进度" />
          <DialogTools>
            <Tool label="取消"><DeleteIcon /></Tool>
            <Tool label="跳过"><SkipIcon /></Tool>
            <Tool label="最小化"><MinimizeIcon /></Tool>
            <Tool label="后台传输"><BackgroundIcon /></Tool>
            <Tool label="完成后"><DoneActionIcon /></Tool>
            <More label="完成后选项" />
            <Combo $w={134} $flat>
              <GaugeIcon />
              <ComboSelect aria-label="速度限制">
                <option>无限制</option>
              </ComboSelect>
              <ComboCaret $flat><Caret /></ComboCaret>
            </Combo>
          </DialogTools>
        </Details>
      </DialogBody>
    </Dialog>
  </Overlay>
);

export default function App() {
  return (
    <>
      <GlobalStyle />
      <Window>
        <DesktopEdge />
        <TitleBar>
          <AppLogo />
          <WindowTitle>Linux镜像 - root@192.168.100.20 - WinSCP</WindowTitle>
          <FrameButton type="button" aria-label="最小化">
            <svg width="12" height="12" viewBox="0 0 12 12"><path d="M0 5.500h12" stroke="currentColor" /></svg>
          </FrameButton>
          <FrameButton type="button" aria-label="最大化">
            <svg width="12" height="12" viewBox="0 0 12 12"><path d="M.5.500h11v11H.5z" fill="none" stroke="currentColor" /></svg>
          </FrameButton>
          <FrameButton type="button" $w={60} aria-label="关闭"><Cross /></FrameButton>
        </TitleBar>
        <MenuBar>
          <Grip />
          {menus.map((m) => (
            <MenuItem key={m} type="button">{m}</MenuItem>
          ))}
        </MenuBar>
        <ToolRow>
          <Grip />
          <Tool label="比较目录"><CompareIcon /></Tool>
          <Tool label="同步浏览"><SyncBrowseIcon /></Tool>
          <Tool text="同步"><SyncIcon /></Tool>
          <Divider />
          <Tool label="终端"><TerminalIcon /></Tool>
          <Tool label="PuTTY"><PuttyIcon /></Tool>
          <Divider />
          <Tool label="保持同步"><SplitIcon /></Tool>
          <Grip $before={6} />
          <Tool label="选项"><GearIcon /></Tool>
          <Divider />
          <Tool text="队列"><QueueIcon /></Tool>
          <More label="队列选项" />
          <Grip $before={15} />
          <FieldLabel htmlFor="transfer-preset">传输选项</FieldLabel>
          <Combo $w={183}>
            <ComboSelect id="transfer-preset">
              <option>默认</option>
            </ComboSelect>
            <ComboCaret><Caret /></ComboCaret>
          </Combo>
          <Grip $before={7} />
          <Tool label="重新连接"><GlobeIcon /></Tool>
          <More label="连接选项" />
        </ToolRow>
        <Tabs>
          <Tab $active>
            <TabButton type="button"><MonitorIcon />root@192.168.100.20</TabButton>
            <TabClose type="button" aria-label="关闭标签"><Cross size={11} /></TabClose>
          </Tab>
          <Tab>
            <TabButton type="button"><NewSessionIcon />新建会话</TabButton>
          </Tab>
        </Tabs>
        <Panes>
          <Pane>
            <PlaceTools />
            <FileTools />
            <PathBar>D:\云计算\Linux镜像\</PathBar>
            <FileList columns={localColumns} rows={localRows} />
            <PaneStatus>
              <span>4.21 GB / 4.91 GB,    1 / 17</span>
            </PaneStatus>
          </Pane>
          <Pane>
            <PlaceTools remote />
            <FileTools remote />
            <PathBar>/root/</PathBar>
            <FileList columns={remoteColumns} rows={remoteRows} />
            <PaneStatus>
              <span>0 B / 3.50 KB,    0 / 10</span>
              <span>13已隐藏</span>
            </PaneStatus>
          </Pane>
        </Panes>
        <StatusBar>
          <StatusBox />
          <StatusBox $w={41}><LockIcon /></StatusBox>
          <StatusBox $w={84}>SFTP-3</StatusBox>
          <StatusBox $w={41}><CompressIcon /></StatusBox>
          <StatusBox $w={98}>0:01:47</StatusBox>
        </StatusBar>
      </Window>
      <UploadDialog />
    </>
  );
}
